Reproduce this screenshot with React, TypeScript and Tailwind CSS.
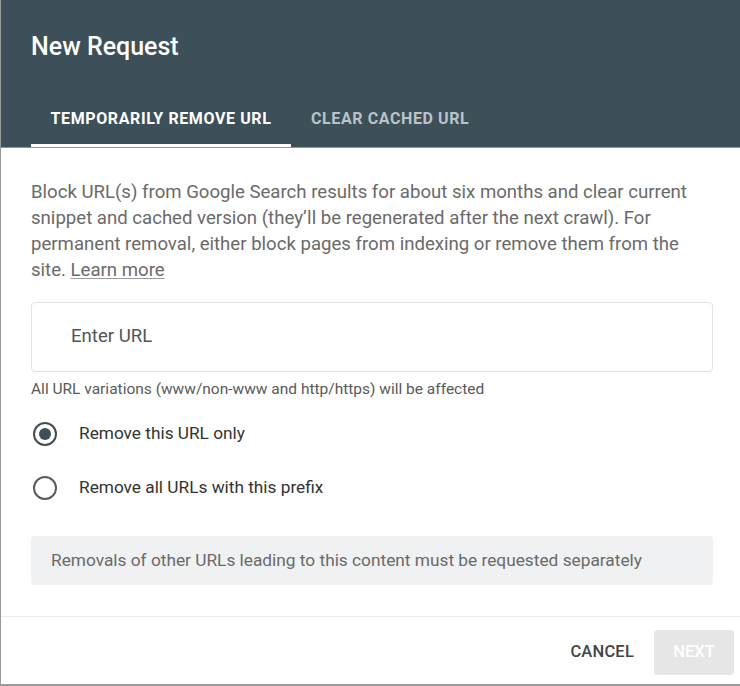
import React from "react";

export default function App() {
  return (
    <div
      className="w-[740px] h-[686px] bg-white border-l border-b-2 border-[#9a9a9a] flex flex-col overflow-hidden"
      style={{ fontFamily: "Roboto, 'Liberation Sans', sans-serif" }}
    >
      <div className="bg-[#3d4f58] h-[148px] flex flex-col shrink-0 border-b border-[#8a979d]">
        <div className="pl-[30px] pt-[31px] h-[94px] text-white text-[25px] font-medium leading-[32px]">
          New Request
        </div>
        <div className="flex pl-[30px] h-[53px]">
          <div className="w-[260px] flex flex-col">
            <div className="flex-1 flex items-center justify-center text-white text-[16px] font-bold tracking-[0.6px]">
              TEMPORARILY REMOVE URL
            </div>
            <div className="h-[3px] bg-white" />
          </div>
          <div className="px-[20px] flex items-center text-[#b9c3c8] text-[16px] font-bold tracking-[0.6px] pb-[3px]">
            CLEAR CACHED URL
          </div>
        </div>
      </div>

      <div className="flex-1 px-[30px] pt-[31px]">
        <p className="text-[18.6px] leading-[26px] text-[#6a6a6a] w-[670px]">
          Block URL(s) from Google Search results for about six months and clear current snippet and cached version
          (they’ll be regenerated after the next crawl). For permanent removal, either block pages from indexing or
          remove them from the site. <span className="underline underline-offset-2 decoration-[#9a9a9a]">Learn more</span>
        </p>

        <div className="mt-[19px] w-[682px] h-[70px] border border-[#e2e2e2] rounded-[4px] flex items-center pl-[39px] text-[18.6px] text-[#555]">
          Enter URL
        </div>
        <div className="mt-[7px] text-[15.5px] text-[#5a5a5a] leading-[20px]">
          All URL variations (www/non-www and http/https) will be affected
        </div>

        <div className="mt-[23px] flex items-center h-[24px]">
          <div className="w-[24px] h-[24px] rounded-full border-2 border-[#4a4a4a] flex items-center justify-center ml-[2px]">
            <div className="w-[12px] h-[12px] rounded-full bg-[#3d4f58]" />
          </div>
          <span className="ml-[22px] text-[17.25px] text-[#333]">Remove this URL only</span>
        </div>
        <div className="mt-[30px] flex items-center h-[24px]">
          <div className="w-[24px] h-[24px] rounded-full border-2 border-[#5a5a5a] ml-[2px]" />
          <span className="ml-[22px] text-[17.25px] text-[#333]">Remove all URLs with this prefix</span>
        </div>

        <div className="mt-[36px] w-[682px] h-[49px] bg-[#f0f1f2] rounded-[4px] flex items-center pl-[20px] text-[17.3px] text-[#6a6a6a]">
          Removals of other URLs leading to this content must be requested separately
        </div>
      </div>

      <div className="border-t border-[#ebebeb] h-[68px] shrink-0 flex items-center justify-end pr-[6px] pt-[3px] gap-[20px]">
        <span className="text-[16.5px] font-medium text-[#444] tracking-[0.2px]">CANCEL</span>
        <div className="w-[80px] h-[45px] bg-[#e6e6e6] rounded-[4px] flex items-center justify-center text-white text-[16.5px] font-medium">
          NEXT
        </div>
      </div>
    </div>
  );
}
